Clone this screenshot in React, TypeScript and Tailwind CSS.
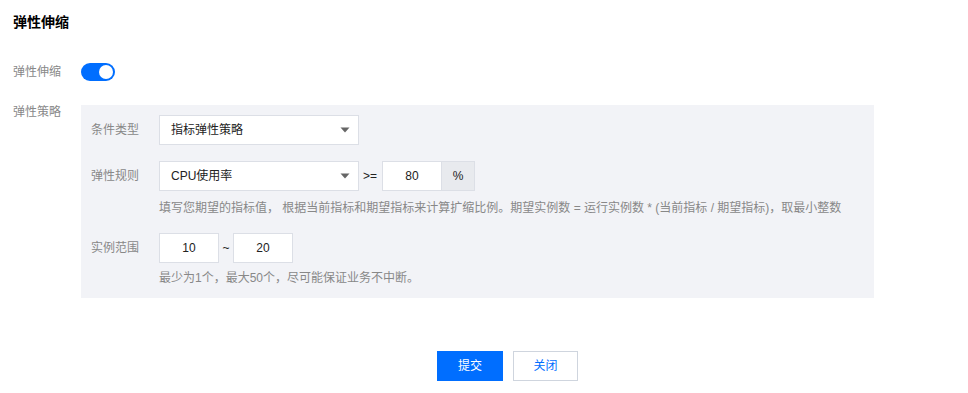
import React from "react";

const font = { fontFamily: '"Liberation Sans", "Noto Sans CJK SC", sans-serif' };

function Caret() {
  return (
    <svg width="10" height="6" viewBox="0 0 10 6" className="shrink-0">
      <path d="M0.5 0.5 H9.5 L5 5.5 Z" fill="#666" />
    </svg>
  );
}

function Select({ text }: { text: string }) {
  return (
    <div className="flex h-[30px] w-[200px] items-center justify-between border border-[#dcdfe6] bg-white pl-[11px] pr-[8px] text-[12px] text-[#222]">
      <span>{text}</span>
      <Caret />
    </div>
  );
}

export default function App() {
  return (
    <div className="min-h-[393px] w-[968px] bg-white pl-[13px]" style={font}>
      <div className="pt-[12px] text-[14px] font-bold leading-[20px] text-black">弹性伸缩</div>

      <div className="mt-[31px] flex h-[18px] items-center">
        <div className="w-[68px] text-[12px] text-[#888]">弹性伸缩</div>
        <div className="relative h-[18px] w-[34px] rounded-full bg-[#006eff]">
          <div className="absolute right-[2px] top-[2px] h-[14px] w-[14px] rounded-full bg-white" />
        </div>
      </div>

      <div className="mt-[24px] flex items-start">
        <div className="w-[68px] text-[12px] leading-[14px] text-[#888]">弹性策略</div>
        <div className="w-[793px] bg-[#f2f3f7] pb-[11px] pl-[10px] pt-[10px] text-[12px]">
          <div className="flex h-[30px] items-center">
            <div className="w-[68px] text-[#888]">条件类型</div>
            <Select text="指标弹性策略" />
          </div>

          <div className="mt-[16px] flex h-[30px] items-center">
            <div className="w-[68px] text-[#888]">弹性规则</div>
            <Select text="CPU使用率" />
            <span className="ml-[4px] mr-[5px] text-[#222]">&gt;=</span>
            <div className="flex h-[30px] w-[60px] items-center justify-center border border-[#dcdfe6] bg-white text-[#222]">80</div>
            <div className="flex h-[30px] w-[33px] items-center justify-center border border-l-0 border-[#dcdfe6] bg-[#e8eaee] text-[#222]">%</div>
          </div>
          <div className="ml-[68px] mt-[8px] leading-[18px] text-[#888]">
            填写您期望的指标值， 根据当前指标和期望指标来计算扩缩比例。期望实例数 = 运行实例数 * (当前指标 / 期望指标)，取最小整数
          </div>

          <div className="mt-[16px] flex h-[30px] items-center">
            <div className="w-[68px] text-[#888]">实例范围</div>
            <div className="flex h-[30px] w-[60px] items-center justify-center border border-[#dcdfe6] bg-white text-[#222]">10</div>
            <span className="w-[14px] text-center text-[#222]">~</span>
            <div className="flex h-[30px] w-[60px] items-center justify-center border border-[#dcdfe6] bg-white text-[#222]">20</div>
          </div>
          <div className="ml-[68px] mt-[6px] leading-[18px] text-[#888]">
            最少为1个，最大50个，尽可能保证业务不中断。
          </div>
        </div>
      </div>

      <div className="ml-[424px] mt-[53px] flex gap-[10px] text-[12px]">
        <div className="flex h-[30px] w-[66px] items-center justify-center bg-[#006eff] text-white">提交</div>
        <div className="flex h-[30px] w-[65px] items-center justify-center border border-[#cfd5de] bg-white text-[#006eff]">关闭</div>
      </div>
    </div>
  );
}
